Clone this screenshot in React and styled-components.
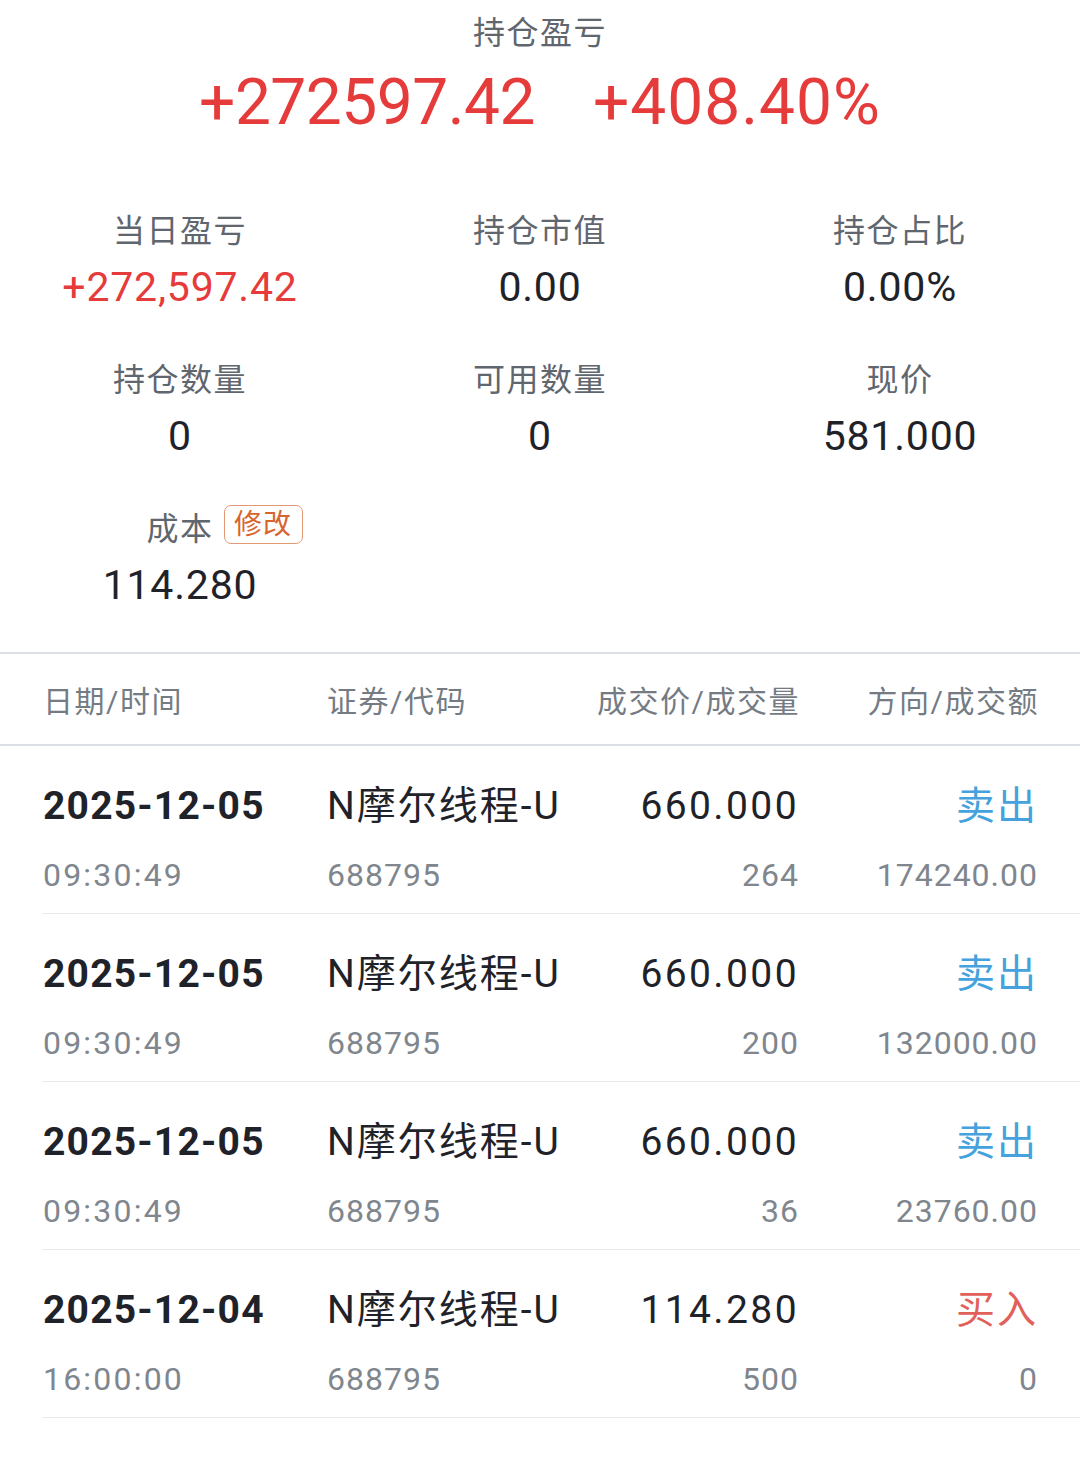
import React from "react";
import styled, { createGlobalStyle } from "styled-components";

const FONT = `Roboto, "Noto Sans CJK SC", sans-serif`;

const Global = createGlobalStyle`
  body {
    margin: 0;
    background: #fff;
    font-family: ${FONT};
  }
`;

const Page = styled.div`
  width: 1080px;
  min-height: 1479px;
  background: #fff;
  color: #1f2329;
`;

const Summary = styled.div`
  display: flex;
  flex-direction: column;
  align-items: center;
  padding-top: 12px;
`;

const Title = styled.div`
  font-size: 32px;
  line-height: 42px;
  color: #5f666e;
  letter-spacing: 1.5px;
`;

const BigRow = styled.div`
  display: flex;
  gap: 58px;
  margin-top: 11px;
`;

const BigNum = styled.span`
  font-size: 64px;
  line-height: 76px;
  color: #e63b3b;
  letter-spacing: ${(p) => (p.wide ? "1px" : "-0.5px")};
`;

const Stats = styled.div`
  display: grid;
  grid-template-columns: repeat(3, 1fr);
  row-gap: 45px;
  margin-top: 70px;
  padding-bottom: 39px;
`;

const Stat = styled.div`
  display: flex;
  flex-direction: column;
  align-items: center;
  gap: 8px;
`;

const Label = styled.div`
  position: relative;
  font-size: 32px;
  line-height: 40px;
  color: #5f666e;
  letter-spacing: 1.5px;
`;

const Badge = styled.span`
  position: absolute;
  left: calc(100% + 10px);
  top: -4px;
  display: flex;
  align-items: center;
  justify-content: center;
  width: 79px;
  height: 39px;
  box-sizing: border-box;
  border: 1.5px solid #e39a74;
  border-radius: 7px;
  font-size: 28px;
  color: #d7652b;
  letter-spacing: 1px;
`;

const Value = styled.div`
  font-size: 41px;
  line-height: 56px;
  letter-spacing: 0.8px;
  color: ${(p) => (p.up ? "#e63b3b" : "#1f2329")};
`;

const Head = styled.div`
  display: grid;
  grid-template-columns: 284px 240px 233px 239px;
  align-items: center;
  height: 90px;
  padding: 0 44px 0 43px;
  border-top: 2px solid #dce0e5;
  border-bottom: 2px solid #dce0e5;
`;

const HeadCell = styled.div`
  font-size: 30px;
  color: #747b83;
  letter-spacing: 1.5px;
  text-align: ${(p) => (p.right ? "right" : "left")};
`;

const Row = styled.div`
  display: grid;
  grid-template-columns: 284px 240px 230px 239px;
  margin-left: 42px;
  padding: 36px 44px 16px 1px;
  border-bottom: 1px solid #e8ebee;
`;

const Cell = styled.div`
  display: flex;
  flex-direction: column;
  align-items: ${(p) => (p.right ? "flex-end" : "flex-start")};
  margin-right: ${(p) => (p.right ? "-2px" : "0")};
  gap: 23px;
  white-space: nowrap;
`;

const Main = styled.div`
  font-size: 39px;
  font-weight: ${(p) => (p.bold ? 700 : 400)};
  line-height: 48px;
  letter-spacing: ${(p) => (p.bold ? "1.2px" : p.num ? "2.4px" : "2px")};
  color: ${(p) => p.color || "#1f2329"};
`;

const Sub = styled.div`
  font-size: 32px;
  line-height: 44px;
  color: #7f868d;
  letter-spacing: ${(p) => (p.time ? "2.2px" : "1px")};
`;

const trades = [
  { date: "2025-12-05", time: "09:30:49", price: "660.000", qty: "264", side: "卖出", amount: "174240.00" },
  { date: "2025-12-05", time: "09:30:49", price: "660.000", qty: "200", side: "卖出", amount: "132000.00" },
  { date: "2025-12-05", time: "09:30:49", price: "660.000", qty: "36", side: "卖出", amount: "23760.00" },
  { date: "2025-12-04", time: "16:00:00", price: "114.280", qty: "500", side: "买入", amount: "0" },
];

export default function App() {
  return (
    <Page>
      <Global />
      <Summary>
        <Title>持仓盈亏</Title>
        <BigRow>
          <BigNum>+272597.42</BigNum>
          <BigNum wide>+408.40%</BigNum>
        </BigRow>
      </Summary>

      <Stats>
        <Stat>
          <Label>当日盈亏</Label>
          <Value up>+272,597.42</Value>
        </Stat>
        <Stat>
          <Label>持仓市值</Label>
          <Value>0.00</Value>
        </Stat>
        <Stat>
          <Label>持仓占比</Label>
          <Value>0.00%</Value>
        </Stat>
        <Stat>
          <Label>持仓数量</Label>
          <Value>0</Value>
        </Stat>
        <Stat>
          <Label>可用数量</Label>
          <Value>0</Value>
        </Stat>
        <Stat>
          <Label>现价</Label>
          <Value>581.000</Value>
        </Stat>
        <Stat>
          <Label>
            成本<Badge>修改</Badge>
          </Label>
          <Value>114.280</Value>
        </Stat>
      </Stats>

      <Head>
        <HeadCell>日期/时间</HeadCell>
        <HeadCell>证券/代码</HeadCell>
        <HeadCell right>成交价/成交量</HeadCell>
        <HeadCell right>方向/成交额</HeadCell>
      </Head>

      {trades.map((t, i) => (
        <Row key={i}>
          <Cell>
            <Main bold>{t.date}</Main>
            <Sub time>{t.time}</Sub>
          </Cell>
          <Cell>
            <Main>N摩尔线程-U</Main>
            <Sub>688795</Sub>
          </Cell>
          <Cell right>
            <Main num>{t.price}</Main>
            <Sub>{t.qty}</Sub>
          </Cell>
          <Cell right>
            <Main color={t.side === "卖出" ? "#45a2dd" : "#e2605a"}>{t.side}</Main>
            <Sub>{t.amount}</Sub>
          </Cell>
        </Row>
      ))}
    </Page>
  );
}
